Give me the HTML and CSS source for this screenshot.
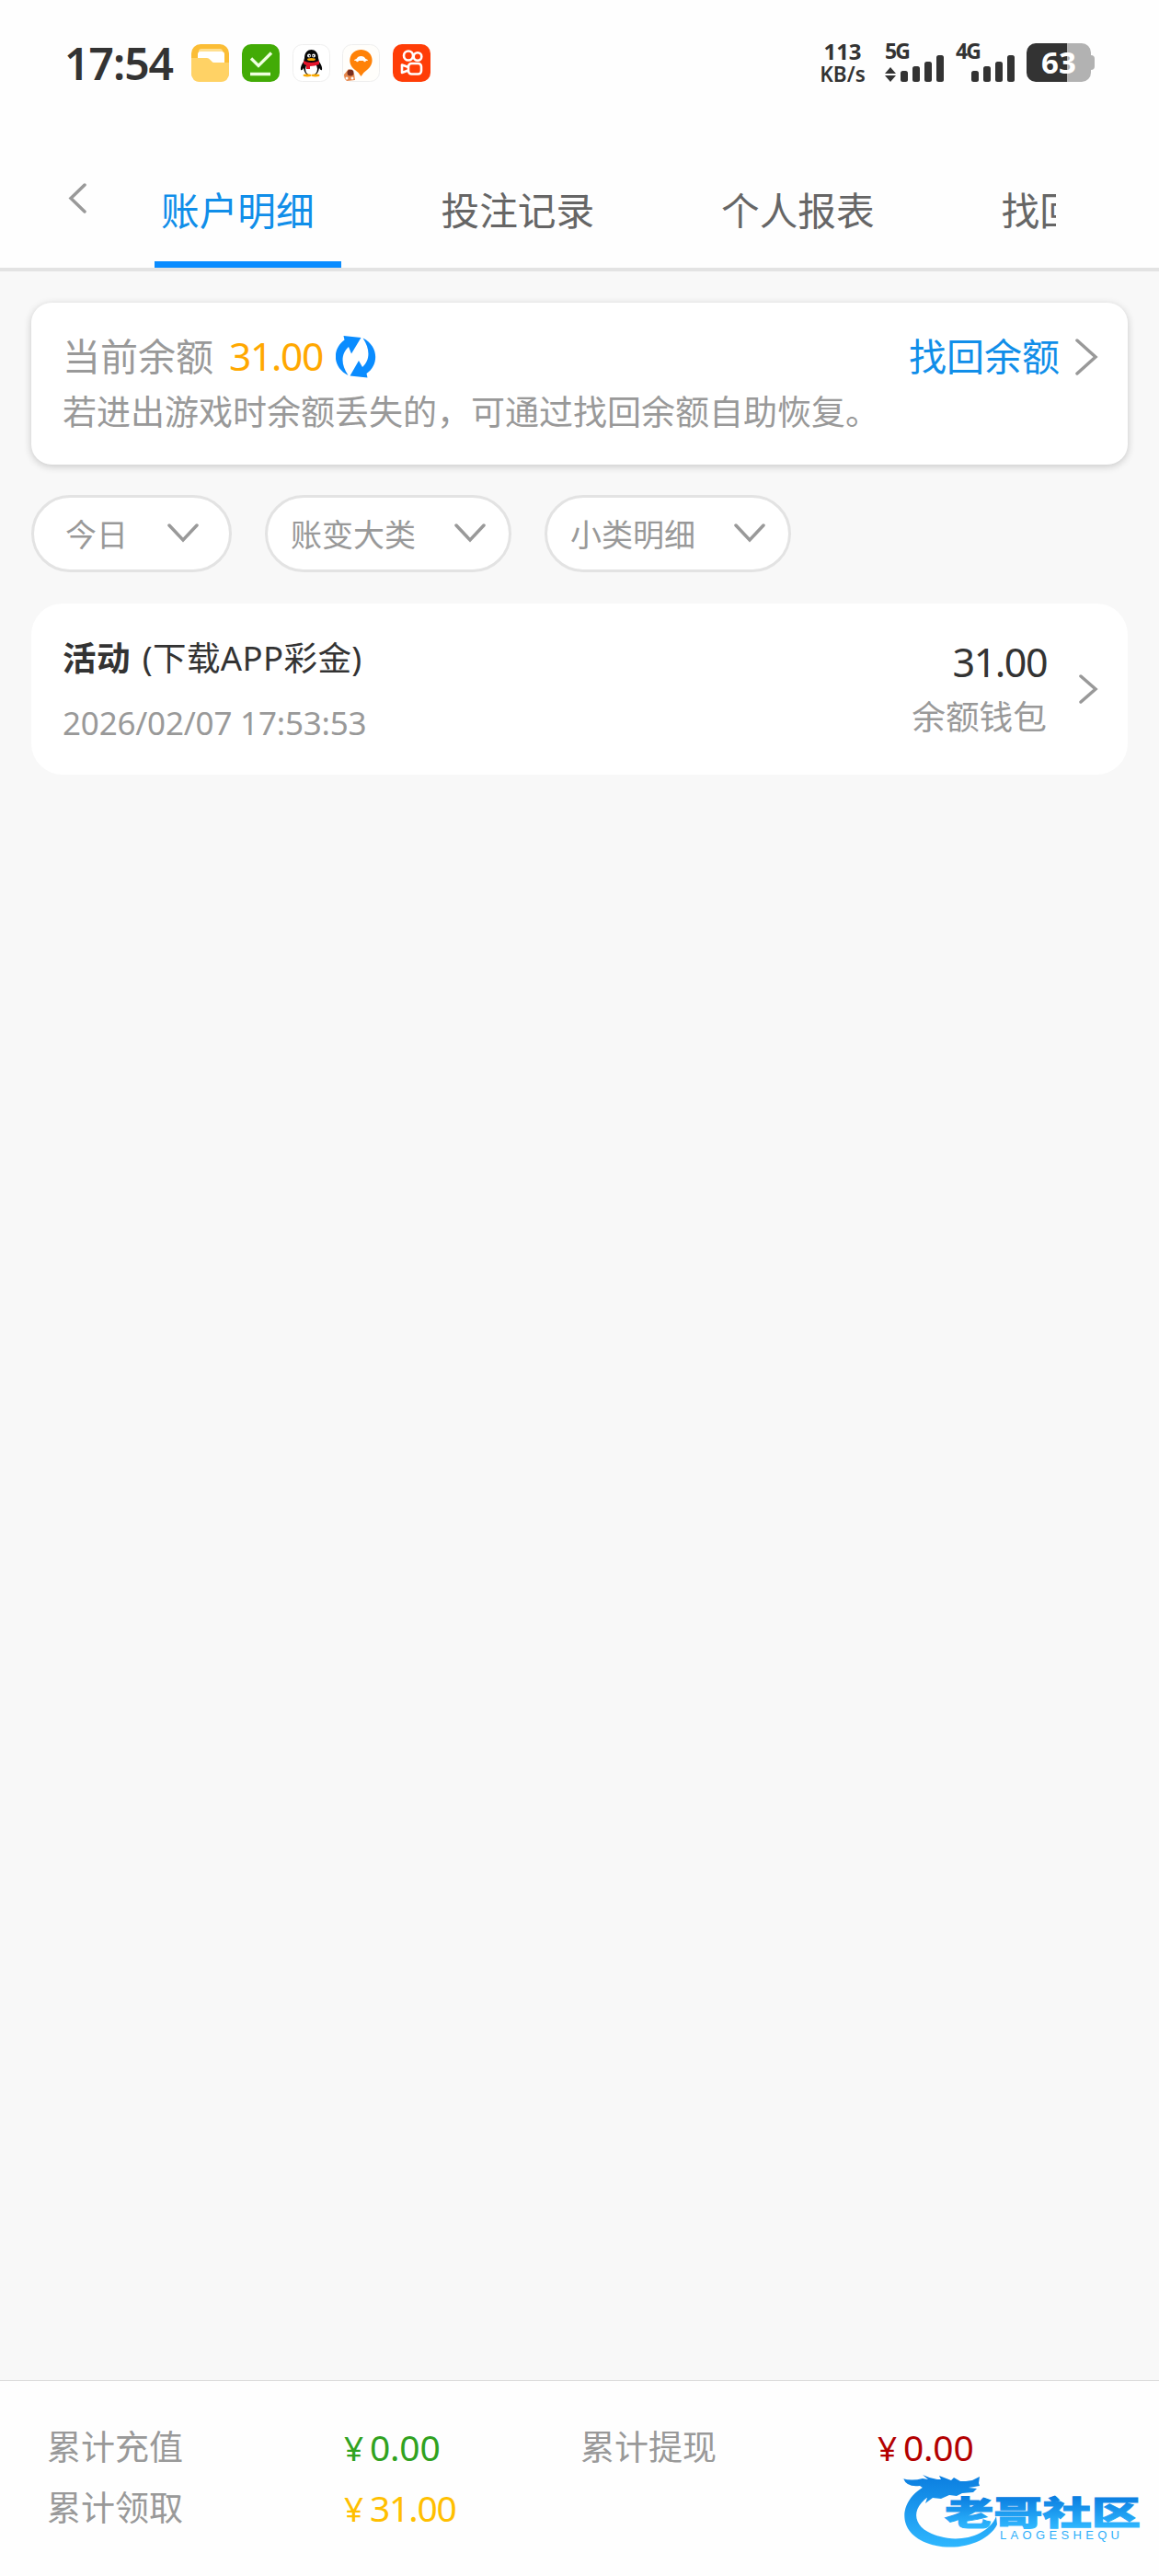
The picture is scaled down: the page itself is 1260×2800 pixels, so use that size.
FILE: index.html
```html
<!DOCTYPE html>
<html lang="zh-CN">
<head>
  <meta charset="UTF-8">
  <title>账户明细</title>
  <link rel="stylesheet" href="styles.css">
</head>
<body>

  <header class="header">
    <div class="status-bar">
      <div class="time">17:54</div>
      <div class="app-icons">
        <svg width="41" height="41" viewBox="0 0 41 41">
          <rect width="41" height="41" rx="10" fill="#fbbd35"/>
          <path d="M8 16V8q0-3 3-3h20q3 0 3 3v12H8z" fill="#ffdf8f"/>
          <path d="M7 16V11q0-3 3-3h23q3 0 3 3v9H20z" fill="#fff"/>
          <path d="M0 15h17q2 0 3 1.500l2 2q1 1.500 3 1.500h16v11q0 10-10 10H10Q0 41 0 31z" fill="#ffd265"/>
        </svg>
        <svg width="41" height="41" viewBox="0 0 41 41">
          <rect width="41" height="41" rx="10" fill="#42ab06"/>
          <path d="M10 15.500l8 8L32 9.500M9 32.500h22" fill="none" stroke="#efffdf" stroke-width="3.300"/>
        </svg>
        <svg width="41" height="41" viewBox="0 0 41 41">
          <rect x=".5" y=".5" width="40" height="40" rx="10" fill="#fff" stroke="#eee"/>
          <path d="M13 15C13 3 28 3 28 15l1 4q4 6 3 9-1 1-3-2-1 6-5 8h-7q-4-2-5-8-2 3-3 2-1-3 3-9z" fill="#080808"/>
          <ellipse cx="20.500" cy="27" rx="6.500" ry="7" fill="#fff"/>
          <circle cx="18" cy="12.500" r="2" fill="#fff"/><circle cx="23" cy="12.500" r="2" fill="#fff"/>
          <circle cx="18.500" cy="12.700" r=".8"/><circle cx="22.500" cy="12.700" r=".8"/>
          <ellipse cx="20.500" cy="16.500" rx="4.500" ry="1.500" fill="#f8a800"/>
          <path d="M12 18q8 4 17 0v4q-5 2-10 2v3h-4v-4q-3-1-3-2z" fill="#e5152b"/>
          <ellipse cx="16" cy="34" rx="4.500" ry="1.400" fill="#f8a800"/><ellipse cx="25" cy="34" rx="4.500" ry="1.400" fill="#f8a800"/>
        </svg>
        <svg width="41" height="41" viewBox="0 0 41 41">
          <rect x=".5" y=".5" width="40" height="40" rx="10" fill="#fffefb" stroke="#eee"/>
          <path d="M20.500 35Q18.500 31 14 28C4 21 8 6 20.500 6S37 21 27 28q-4.500 3-6.500 7z" fill="#ff8208"/>
          <path d="M13 18q0-1.500 2.500-2 1.500-3 5-3t5 3q2.500.5 2.500 2z" fill="#fff"/>
          <circle cx="16.500" cy="18" r="1.300" fill="#fff"/><circle cx="24.500" cy="18" r="1.300" fill="#fff"/>
          <path d="M2 33l5-6 6 5 1 7-9 1q-3-2-3-7z" fill="#e7884c"/>
          <circle cx="9" cy="31" r="3.500" fill="#783020"/><circle cx="5" cy="37" r="1.500" fill="#fff"/><circle cx="11" cy="37" r="1.500" fill="#fff"/>
        </svg>
        <svg width="41" height="41" viewBox="0 0 41 41">
          <rect width="41" height="41" rx="10" fill="#ff3d07"/>
          <g fill="none" stroke="#fff" stroke-width="2.600">
            <circle cx="17" cy="12.500" r="5"/><circle cx="27" cy="13.500" r="4.300"/>
            <rect x="17" y="21" width="14" height="11.500" rx="3.500"/>
            <path d="M17 25l-7-2.500v8.500l7-2.500" stroke-linejoin="round"/>
          </g>
        </svg>
      </div>
      <div class="speed"><span>113</span><span class="unit">KB/s</span></div>
      <svg class="signal" width="65" height="56" viewBox="0 -6 65 56">
        <text x="0" y="18" textLength="28">5G</text>
        <path d="M6 27l6 7H0zM6 43l6-7H0z"/>
        <rect x="17" y="31" width="8" height="12" rx="2.500"/><rect x="30" y="26" width="8" height="17" rx="2.500"/>
        <rect x="43" y="21" width="8" height="22" rx="2.500"/><rect x="56" y="14" width="8" height="29" rx="2.500"/>
      </svg>
      <svg class="signal" width="65" height="56" viewBox="0 -6 65 56">
        <text x="0" y="18" textLength="28">4G</text>
        <rect x="17" y="31" width="8" height="12" rx="2.500"/><rect x="30" y="26" width="8" height="17" rx="2.500"/>
        <rect x="43" y="21" width="8" height="22" rx="2.500"/><rect x="56" y="14" width="8" height="29" rx="2.500"/>
      </svg>
      <div class="battery"><span class="battery-level">63</span></div>
    </div>

    <nav class="nav">
      <svg class="back" width="24" height="36" viewBox="0 0 24 36"><path d="M22 3L7 17.500 22 32"/></svg>
      <div class="tabs">
        <div class="tab active">账户明细</div>
        <div class="tab">投注记录</div>
        <div class="tab">个人报表</div>
        <div class="tab">找回余额</div>
      </div>
    </nav>
  </header>

  <main class="content">
    <section class="balance">
      <div class="balance-row">
        <span>当前余额</span>
        <span class="balance-amount">31.00</span>
        <svg class="refresh" width="44" height="46" viewBox="0 0 44 46">
          <path d="M8.500 0L27.500 2 17 19.500 14 12C6 19 5 31 13.500 43-4 34-4 14 9.500 4.500z"/>
          <path d="M34.500 45.500L15.500 43.500 25 27l4 7C37 27 38 15 29.500 2.500 47 11 47 32 33.500 41z"/>
        </svg>
        <a class="recover">找回余额</a>
        <svg class="chevron" width="26" height="42" viewBox="0 0 26 42"><path d="M2 3l20 18L2 39"/></svg>
      </div>
      <p class="tip">若进出游戏时余额丢失的，可通过找回余额自助恢复。</p>
    </section>

    <div class="filters">
      <div class="filter filter-date">今日<svg width="34" height="22" viewBox="0 0 34 22"><path d="M2 3l15 16L32 3"/></svg></div>
      <div class="filter">账变大类<svg width="34" height="22" viewBox="0 0 34 22"><path d="M2 3l15 16L32 3"/></svg></div>
      <div class="filter">小类明细<svg width="34" height="22" viewBox="0 0 34 22"><path d="M2 3l15 16L32 3"/></svg></div>
    </div>

    <section class="record">
      <div class="record-info">
        <div class="record-title"><b>活动</b> (下载APP彩金)</div>
        <div class="record-date">2026/02/07 17:53:53</div>
      </div>
      <div class="record-value">
        <div class="record-amount">31.00</div>
        <div class="record-wallet">余额钱包</div>
      </div>
      <svg class="chevron" width="22" height="34" viewBox="0 0 22 34"><path d="M3 3l16 14L3 31"/></svg>
    </section>
  </main>

  <footer class="totals">
    <span>累计充值</span><span class="money green"><i>¥</i>0.00</span>
    <span>累计提现</span><span class="money red"><i>¥</i>0.00</span>
    <span>累计领取</span><span class="money amber"><i>¥</i>31.00</span>
  </footer>

  <svg class="logo" width="262" height="86" viewBox="0 0 262 86">
    <defs>
      <linearGradient id="blue" gradientUnits="userSpaceOnUse" x1="0" y1="5" x2="0" y2="84">
        <stop offset="0" stop-color="#0b7ee0"/>
        <stop offset="1" stop-color="#2fb8ff"/>
      </linearGradient>
      <linearGradient id="name" gradientUnits="userSpaceOnUse" x1="0" y1="28" x2="0" y2="62">
        <stop offset="0" stop-color="#0b7ee0"/>
        <stop offset="1" stop-color="#2fb8ff"/>
      </linearGradient>
    </defs>
    <g fill="url(#blue)">
      <path d="M33 13C-4 27-8 67 30 79c31 10 65-2 74-21l-1-9C95 70 64 78 42 71 8 63 7 35 42 21z"/>
      <path d="M1 8q10 3 22 0l6 1-6-5q10 5 20 5l-2-4 13 5 3-3 7 4 6 0 7-1 8-4-1 7 1 3-12 2 9 1-4 4-12 1-6 3-8-1-9 4-9-1-8 6 2-6-8 1 9-8-9-6q-14 2-18-8z"/>
      <text class="logo-name" x="47" y="59" textLength="213" lengthAdjust="spacingAndGlyphs">老哥社区</text>
      <text class="logo-sub" x="107" y="74" textLength="130">LAOGESHEQU</text>
    </g>
  </svg>

</body>
</html>
```
FILE: styles.css
```css
* {
  box-sizing: border-box;
}
body {
  margin: 0;
  height: 2800px;
  display: flex;
  flex-direction: column;
  background: #f8f8f8;
  color: #999;
  font-family: "Noto Sans", "Noto Sans CJK SC", sans-serif;
}
svg {
  flex: none;
}
.header {
  height: 295px;
  background: #fefefe;
  border-bottom: 4px solid #e3e3e3;
}
.status-bar {
  display: flex;
  align-items: center;
  height: 136px;
  padding: 0 70px;
  color: #333;
}
.time {
  width: 138px;
  font-size: 48px;
  font-weight: 600;
  letter-spacing: -1px;
}
.app-icons {
  display: flex;
  gap: 13.800px;
}
.speed {
  display: flex;
  flex-direction: column;
  align-items: center;
  width: 52px;
  margin-left: auto;
  margin-right: 20px;
  font-size: 24px;
  font-weight: 700;
  line-height: 25px;
}
.unit {
  font-size: 22.500px;
  font-weight: 600;
}
.signal {
  margin-right: 12px;
  fill: #333;
  font-size: 23px;
  font-weight: 700;
}
.battery {
  position: relative;
  width: 70px;
  height: 42px;
  margin-right: 4px;
  border-radius: 10px;
  background: linear-gradient(90deg, #333 44px, #b2b2b2 44px);
  text-align: center;
}
.battery::after {
  content: "";
  position: absolute;
  left: 70px;
  top: 13px;
  width: 4px;
  height: 16px;
  border-radius: 0 4px 4px 0;
  background: #b2b2b2;
}
.battery-level {
  color: #fff;
  font-size: 33px;
  font-weight: 700;
  line-height: 42px;
}
.nav {
  display: flex;
  height: 155px;
  padding: 0 112px 0 70px;
}
.back {
  margin: 62px 74px 0 0;
}
.back path,
.chevron path,
.filter path {
  fill: none;
  stroke: #999;
  stroke-width: 3.500;
  stroke-linecap: round;
}
.tabs {
  display: flex;
  flex: 1;
  overflow: hidden;
}
.tab {
  flex: none;
  width: 203px;
  margin-right: 101.500px;
  padding: 63px 0 0 7px;
  color: #666;
  font-size: 41.700px;
  line-height: 60px;
  white-space: nowrap;
}
.tab.active {
  color: #108ee9;
  border-bottom: 7px solid #0a8cff;
}
.content {
  flex: 1;
  padding: 34px 34px 0;
}
.balance {
  height: 176px;
  padding: 28px 31px 0 34px;
  border-radius: 22px;
  background: #fff;
  box-shadow: 0 2px 8px rgba(0, 0, 0, 0.2);
}
.balance-row {
  display: flex;
  align-items: center;
  height: 62px;
  font-size: 41px;
  line-height: 60px;
}
.balance-row span,
.recover {
  padding-bottom: 2px;
}
.balance-amount {
  margin: 0 14px 0 17px;
  color: #ffa800;
  font-size: 42.500px;
  letter-spacing: -1.300px;
}
.refresh {
  fill: #0a8cff;
}
.recover {
  margin-left: auto;
  margin-right: 17px;
  color: #108ee9;
}
.tip {
  margin: 0;
  font-size: 37px;
  line-height: 57px;
}
.filters {
  display: flex;
  gap: 36px;
  margin-top: 33px;
}
.filter {
  display: flex;
  align-items: center;
  justify-content: space-between;
  width: 268px;
  height: 84px;
  padding: 0 25px 2px;
  border: 3px solid #e3e3e3;
  border-radius: 42px;
  background: #fff;
  font-size: 34px;
}
.filter-date {
  width: 218px;
  padding: 0 33px 2px 34px;
}
.record {
  display: flex;
  height: 186px;
  margin-top: 34px;
  padding: 0 32px 0 34px;
  border-radius: 34px;
  background: #fff;
}
.record-info {
  flex: 1;
  padding-top: 34px;
}
.record-title {
  color: #333;
  font-size: 36.500px;
  line-height: 50px;
  word-spacing: 3px;
  letter-spacing: 0.400px;
}
.record-date {
  margin-top: 21px;
  font-size: 35px;
  line-height: 50px;
  letter-spacing: -0.200px;
}
.record-value {
  padding-top: 35px;
  text-align: right;
}
.record-amount {
  color: #333;
  font-size: 43px;
  line-height: 58px;
  letter-spacing: -1.500px;
}
.record-wallet {
  font-size: 36.700px;
  line-height: 60px;
}
.record .chevron {
  margin: 76px 0 0 34px;
}
.totals {
  display: grid;
  grid-template-columns: 323px 257px 323px 1fr;
  height: 213px;
  padding: 39px 51px 0;
  border-top: 1px solid #ddd;
  background: #fefefe;
  font-size: 37px;
  line-height: 66px;
  grid-auto-rows: 66px;
}
.money {
  font-size: 39px;
  letter-spacing: -0.200px;
}
.money i {
  display: inline-block;
  width: 28px;
  font-size: 37px;
  font-style: normal;
}
.green {
  color: #30a220;
}
.red {
  color: #b30000;
}
.amber {
  color: #ffbf00;
  letter-spacing: -1.200px;
}
/* watermark over the footer */
.logo {
  position: absolute;
  left: 980px;
  top: 2686px;
}
.logo-name {
  fill: url(#name);
  font-family: "Noto Sans CJK SC", sans-serif;
  font-size: 36px;
  font-weight: 900;
  stroke: url(#name);
  stroke-width: 1;
}
.logo-sub {
  font-family: "Liberation Sans", sans-serif;
  font-size: 13px;
}
```
